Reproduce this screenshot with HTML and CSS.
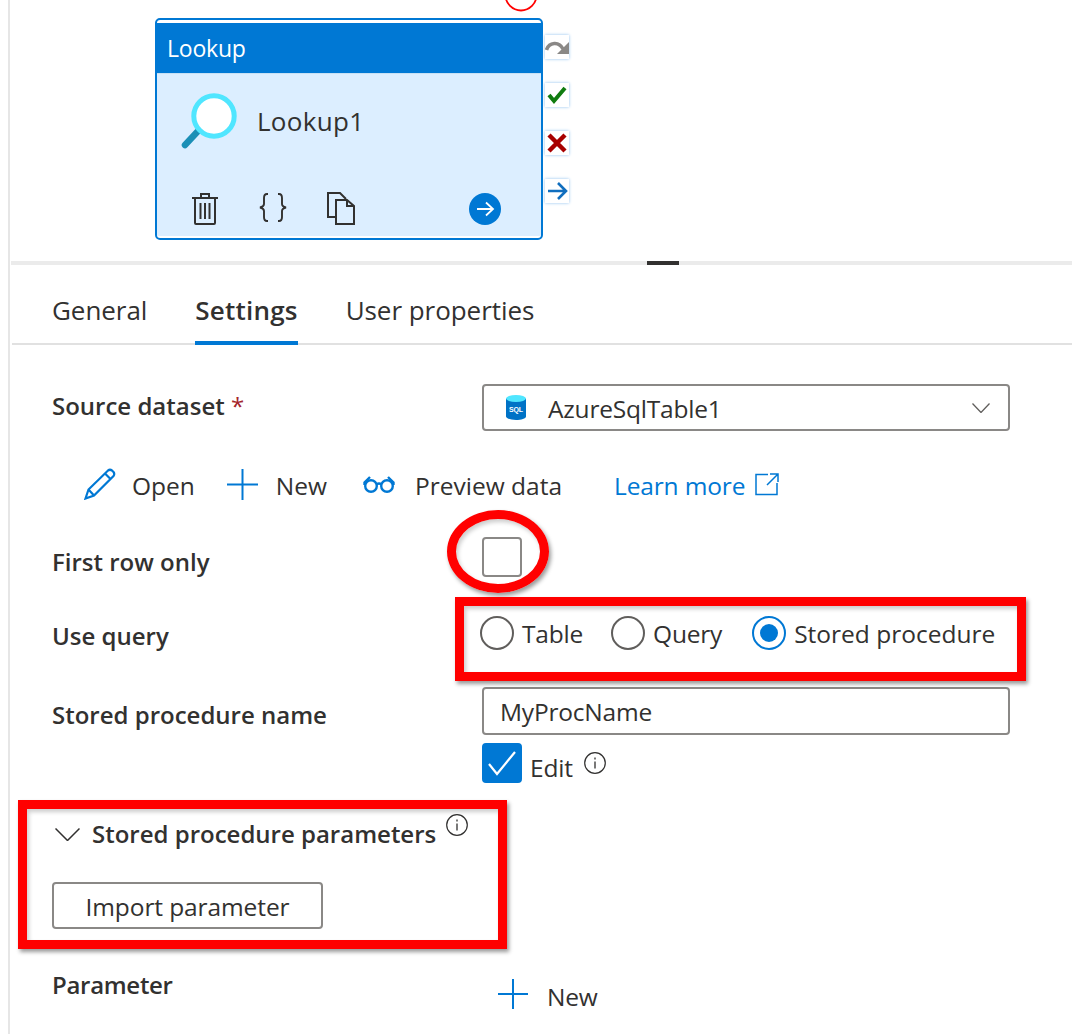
FILE: index.html
```html
<!DOCTYPE html>
<html lang="en">
<head>
<meta charset="utf-8">
<title>Lookup settings</title>
<link rel="stylesheet" href="styles.css">
</head>
<body>
<div class="page">
  <section class="canvas">
    <svg class="top-ring" width="40" height="14" viewBox="0 0 40 14"><circle cx="20" cy="-5" r="15.500" fill="none" stroke="#f00" stroke-width="1.800"/></svg>
    <div class="node">
      <div class="node-head">Lookup</div>
      <div class="node-body">
        <div class="node-main">
          <svg class="node-icon" width="60" height="62" viewBox="0 0 60 62"><path d="M20 37 6 52" stroke="#1b8fb6" stroke-width="6.500" stroke-linecap="round"/><circle cx="35" cy="23" r="20.200" fill="#fff" stroke="#50e6ff" stroke-width="5"/></svg>
          <span class="node-name">Lookup1</span>
        </div>
        <div class="node-tools">
          <svg class="tool-trash" width="26" height="32" viewBox="0 0 26 32" fill="none" stroke="#323130" stroke-width="2"><path d="M0 5h26M3 5v25q0 1 1 1h18q1 0 1-1V5M9 5V1h8v4M8.500 10v16M13 10v16M17.500 10v16"/></svg>
          <svg class="tool-braces" width="28" height="29" viewBox="0 0 28 29" fill="none" stroke="#323130" stroke-width="1.900"><path d="M9 1H8Q5 1 5 5V11Q5 13.500 1 14.500Q5 15.500 5 18V24Q5 28 8 28H9M19 1H20Q23 1 23 5V11Q23 13.500 27 14.500Q23 15.500 23 18V24Q23 28 20 28H19"/></svg>
          <svg class="tool-copy" width="28" height="33" viewBox="0 0 28 33" fill="none" stroke="#323130" stroke-width="2"><path d="M9 25H1V1h12l6 6"/><path d="M9 8h11l7 6v18H9zM20 8v6h7"/></svg>
          <svg class="tool-go" width="32" height="32" viewBox="0 0 32 32"><circle cx="16" cy="16" r="16" fill="#0078d4"/><path d="M8 16h15M17 9.500l7 6.500-7 6.500" fill="none" stroke="#fff" stroke-width="1.800"/></svg>
        </div>
      </div>
    </div>
    <div class="ports">
      <span class="port"><svg width="24" height="24" viewBox="0 0 24 24"><path d="M1.500 15C4 7 14 6 18 14" fill="none" stroke="#8a8886" stroke-width="3.600"/><path d="M24 7V19H12z" fill="#8a8886"/></svg></span>
      <span class="port"><svg width="24" height="24" viewBox="0 0 24 24"><path d="M4 12l5 6 11-13" fill="none" stroke="#107c10" stroke-width="4"/></svg></span>
      <span class="port"><svg width="24" height="24" viewBox="0 0 24 24"><path d="M4 4l16 16M20 4 4 20" fill="none" stroke="#a80000" stroke-width="4.500"/></svg></span>
      <span class="port"><svg width="24" height="24" viewBox="0 0 24 24"><path d="M3 12h18M13 4l8 8-8 8" fill="none" stroke="#106ebe" stroke-width="2.600"/></svg></span>
    </div>
  </section>
  <div class="splitter"><span class="splitter-handle"></span></div>

  <nav class="tabs">
    <span class="tab">General</span>
    <span class="tab tab-active">Settings</span>
    <span class="tab">User properties</span>
  </nav>

  <form class="form">
    <div class="row row-dataset">
      <span class="label label-dataset">Source dataset <span class="req">*</span></span>
      <div class="field select">
        <svg class="sql" width="22" height="25" viewBox="0 0 22 25"><path d="M1 3.500v18C1 23.500 6 25 11 25s10-1.500 10-3.500v-18z" fill="#0072c6"/><ellipse cx="11" cy="3.500" rx="10" ry="3.500" fill="#50e6ff"/><text x="11" y="16.500" text-anchor="middle" class="sql-text">SQL</text></svg>
        <span class="select-value">AzureSqlTable1</span>
        <svg class="chev" width="18" height="10" viewBox="0 0 18 10"><path d="M.5.5 9 9.500 17.500.5" fill="none" stroke="#605e5c" stroke-width="1.300"/></svg>
      </div>
    </div>

    <div class="actions">
      <svg class="a-pencil" width="32" height="32" viewBox="0 0 32 32" fill="none" stroke="#0078d4" stroke-width="2.200"><path d="M1.500 30.500l3-9L24 2.500q2-1.500 4 0l1.500 1.500q1.500 2 0 4L10 27.500zM4.500 21.500l5.500 6M21 5.500l6 6"/></svg>
      <span class="a-text a-open">Open</span>
      <svg class="a-plus" width="31" height="31" viewBox="0 0 31 31"><path d="M15.500 0v31M0 15.500h31" stroke="#0078d4" stroke-width="2"/></svg>
      <span class="a-text a-new">New</span>
      <svg class="a-glasses" width="32" height="18" viewBox="0 0 32 18" fill="none" stroke="#0078d4" stroke-width="2.400"><circle cx="8" cy="11" r="5.800"/><circle cx="24" cy="11" r="5.800"/><path d="M13.500 9.500q2.500-2 5 0M1.500 10V7.500L7 2M30.500 10V7.500L25 2"/></svg>
      <span class="a-text a-preview">Preview data</span>
      <span class="a-link">Learn more</span>
      <svg class="a-ext" width="24" height="23" viewBox="0 0 24 23" fill="none" stroke="#0078d4" stroke-width="1.500"><path d="M13 1.500H1v20h21V10M15 1h8v8M23 1 12 12"/></svg>
    </div>

    <div class="row row-first">
      <span class="label label-first">First row only</span>
      <span class="checkbox"></span>
    </div>

    <div class="row row-query">
      <span class="label label-query">Use query</span>
      <div class="radios">
        <span class="radio-item"><span class="radio"></span>Table</span>
        <span class="radio-item"><span class="radio"></span>Query</span>
        <span class="radio-item radio-item-stored"><span class="radio radio-on"></span>Stored procedure</span>
      </div>
    </div>

    <div class="row row-proc">
      <span class="label label-proc">Stored procedure name</span>
      <div class="field input">MyProcName</div>
    </div>

    <div class="row row-edit">
      <span></span>
      <div class="edit">
        <span class="checkbox checkbox-on"><svg width="30" height="26" viewBox="0 0 30 26"><path d="M2 14l8 10L28 2" fill="none" stroke="#fff" stroke-width="2.200"/></svg></span>
        <span class="edit-text">Edit</span>
        <svg class="info info-edit" width="22" height="22" viewBox="0 0 22 22"><circle cx="11" cy="11" r="10.300" fill="none" stroke="#323130" stroke-width="1.200"/><path d="M11 9.500v7M11 5.500v2" stroke="#323130" stroke-width="1.300"/></svg>
      </div>
    </div>

    <div class="section-head">
      <svg width="25" height="13" viewBox="0 0 25 13"><path d="M.5.5l12 12 12-12" fill="none" stroke="#323130" stroke-width="1.500"/></svg>
      <span class="section-title">Stored procedure parameters</span>
      <svg class="info info-section" width="22" height="22" viewBox="0 0 22 22"><circle cx="11" cy="11" r="10.300" fill="none" stroke="#323130" stroke-width="1.200"/><path d="M11 9.500v7M11 5.500v2" stroke="#323130" stroke-width="1.300"/></svg>
    </div>

    <button class="import" type="button">Import parameter</button>

    <div class="row row-param">
      <span class="label label-param">Parameter</span>
      <div class="param-new">
        <svg width="30" height="30" viewBox="0 0 30 30"><path d="M15 0v30M0 15h30" stroke="#0078d4" stroke-width="2"/></svg>
        <span class="param-new-text">New</span>
      </div>
    </div>
  </form>

  <div class="mark mark-ellipse"></div>
  <div class="mark mark-rect mark-radios"></div>
  <div class="mark mark-rect mark-params"></div>
</div>
</body>
</html>
```

FILE: styles.css
```css
* { box-sizing: border-box; }
html, body { margin: 0; padding: 0; background: #fff; }
body { font-family: "Open Sans", "Noto Sans", "Liberation Sans", sans-serif; color: #323130; }

.page {
  position: relative;
  width: 1072px;
  height: 1034px;
  overflow: hidden;
}
.page::before {
  content: "";
  position: absolute;
  left: 8px; top: 0; bottom: 0;
  width: 2px;
  background: #e6e6e6;
}

/* canvas */
.canvas { position: relative; height: 261px; }
.top-ring { position: absolute; left: 501px; top: 0; }
.node {
  position: absolute;
  left: 155px; top: 18px;
  width: 388px; height: 222px;
  border: 2px solid #0078d4;
  border-radius: 5px;
  padding: 3px 0 2px;
  background: #fff;
  display: flex;
  flex-direction: column;
}
.node-head {
  height: 50px;
  background: #0078d4;
  color: #fff;
  font-size: 23px;
  line-height: 50px;
  padding-left: 10px;
  letter-spacing: -.2px;
}
.node-body {
  flex: 1;
  background: #dceeff;
  border-top: 1px solid #c7e0f4;
  padding: 19px 0 0 22px;
  display: flex;
  flex-direction: column;
}
.node-main { display: flex; align-items: center; height: 62px; }
.node-icon { flex: none; }
.node-name { margin-left: 18px; margin-top: -6px; font-size: 26px; letter-spacing: .3px; }
.node-tools { position: relative; display: flex; align-items: flex-start; margin-top: 35px; padding-left: 13px; height: 34px; }
.tool-trash { margin-top: 3px; flex: none; }
.tool-braces { margin-left: 41px; margin-top: 3px; flex: none; }
.tool-copy { margin-left: 40px; margin-top: 2px; flex: none; }
.tool-go { position: absolute; right: 40px; top: 3px; }

.ports {
  position: absolute;
  left: 545px; top: 35px;
  display: flex;
  flex-direction: column;
  gap: 24px;
}
.port {
  width: 24px; height: 24px;
  background: #fff;
  box-shadow: 0 0 3px #8fc1ee;
  display: block;
}
.port svg { display: block; }

.splitter { position: relative; height: 4px; background: #ebebeb; margin-left: 11px; }
.splitter-handle { position: absolute; left: 636px; top: 0; width: 32px; height: 4px; background: #323130; }

/* tabs */
.tabs {
  margin-left: 12px;
  height: 80px;
  padding-left: 40px;
  display: flex;
  gap: 48px;
  box-shadow: inset 0 -2px 0 #e1e1e1;
}
.tab { font-size: 26px; line-height: 90px; height: 80px; letter-spacing: -.05px; white-space: nowrap; }
.tab-active { font-weight: 600; letter-spacing: .2px; border-bottom: 4px solid #0078d4; }

/* form */
.form { padding: 39px 62px 0 52px; }
.row { display: grid; grid-template-columns: 430px 528px; }
.label { font-size: 24px; line-height: 33px; font-weight: 600; letter-spacing: 0; white-space: nowrap; }
.req { color: #a4262c; font-weight: 400; }
.field {
  height: 48px;
  border: 2px solid #8a8886;
  border-radius: 4px;
  font-size: 24.500px;
  letter-spacing: -.2px;
  display: flex;
  align-items: center;
}

.row-dataset { align-items: center; height: 47px; }
.label-dataset { margin-top: -4px; }
.select { padding-left: 21px; height: 47px; }
.sql { flex: none; }
.sql-text { fill: #fff; font-size: 7px; font-weight: 700; font-family: "Liberation Sans", sans-serif; }
.select-value { margin-left: 21px; flex: 1; position: relative; top: 1px; }
.chev { margin-right: 18px; }

.actions { display: flex; align-items: center; height: 32px; margin-top: 37px; padding-left: 32px; }
.a-text { font-size: 24.500px; letter-spacing: 0; white-space: nowrap; position: relative; top: 1px; }
.a-open { margin-left: 16px; }
.a-plus { margin-left: 32px; }
.a-new { margin-left: 18px; }
.a-glasses { margin-left: 36px; }
.a-preview { margin-left: 20px; }
.a-link { margin-left: 52px; font-size: 24.500px; letter-spacing: -.15px; color: #0078d4; white-space: nowrap; position: relative; top: 1px; }
.a-ext { margin-left: 10px; }

.row-first { margin-top: 37px; height: 40px; }
.label-first { padding-top: 8px; }
.checkbox {
  display: flex;
  align-items: center;
  justify-content: center;
  width: 40px; height: 40px;
  border: 2px solid #8a8886;
  border-radius: 4px;
  background: #fff;
}
.checkbox-on { background: #0078d4; border-color: #0078d4; flex: none; }

.row-query { margin-top: 39px; height: 34px; }
.label-query { padding-top: 3px; }
.radios { display: flex; margin-left: -2px; gap: 28px; }
.radio-item { display: flex; align-items: center; gap: 8px; height: 34px; font-size: 24.500px; letter-spacing: -.2px; white-space: nowrap; }
.radio-item-stored { margin-left: 2px; letter-spacing: 0; }
.radio { width: 34px; height: 34px; border: 2px solid #605e5c; border-radius: 50%; background: #fff; display: block; flex: none; }
.radio-on { border-color: #0078d4; position: relative; }
.radio-on::after { content: ""; position: absolute; left: 6px; top: 6px; width: 18px; height: 18px; border-radius: 50%; background: #0078d4; }

.row-proc { margin-top: 37px; height: 48px; }
.label-proc { padding-top: 11px; }
.input { padding-left: 16px; }

.row-edit { margin-top: 8px; height: 40px; }
.edit { display: flex; align-items: flex-start; height: 40px; }
.edit-text { margin-left: 8px; font-size: 24.500px; line-height: 50px; letter-spacing: -.2px; }
.info { flex: none; }
.info-edit { margin-left: 11px; margin-top: 9px; }

.section-head { display: flex; align-items: center; height: 28px; margin-top: 37px; padding-left: 3px; }
.section-title { margin-left: 12px; font-size: 24px; line-height: 28px; font-weight: 600; letter-spacing: 0; white-space: nowrap; }
.info-section { margin-left: 10px; margin-top: -18px; }

.import {
  display: block;
  width: 271px; height: 47px;
  margin-top: 34px;
  border: 2px solid #8a8886;
  border-radius: 4px;
  background: #fff;
  color: #323130;
  font-family: inherit;
  font-size: 24.500px;
  letter-spacing: -.1px;
  padding: 2px 0 0;
}

.row-param { margin-top: 50px; height: 30px; }
.label-param { margin-top: -11px; letter-spacing: -.3px; }
.param-new { display: flex; align-items: flex-start; padding-left: 16px; height: 30px; }
.param-new svg { flex: none; }
.param-new-text { margin-left: 19px; font-size: 24.500px; line-height: 36px; letter-spacing: -.2px; }

/* annotations drawn over the screenshot */
.mark { position: absolute; border: 9px solid #f00; box-shadow: 2px 3px 4px rgba(0,0,0,.4), inset 2px 3px 4px rgba(0,0,0,.2); }
.mark-ellipse { left: 447px; top: 510px; width: 102px; height: 83px; border-radius: 50%; }
.mark-radios { left: 455px; top: 597px; width: 571px; height: 84px; }
.mark-params { left: 18px; top: 800px; width: 489px; height: 149px; }
```
